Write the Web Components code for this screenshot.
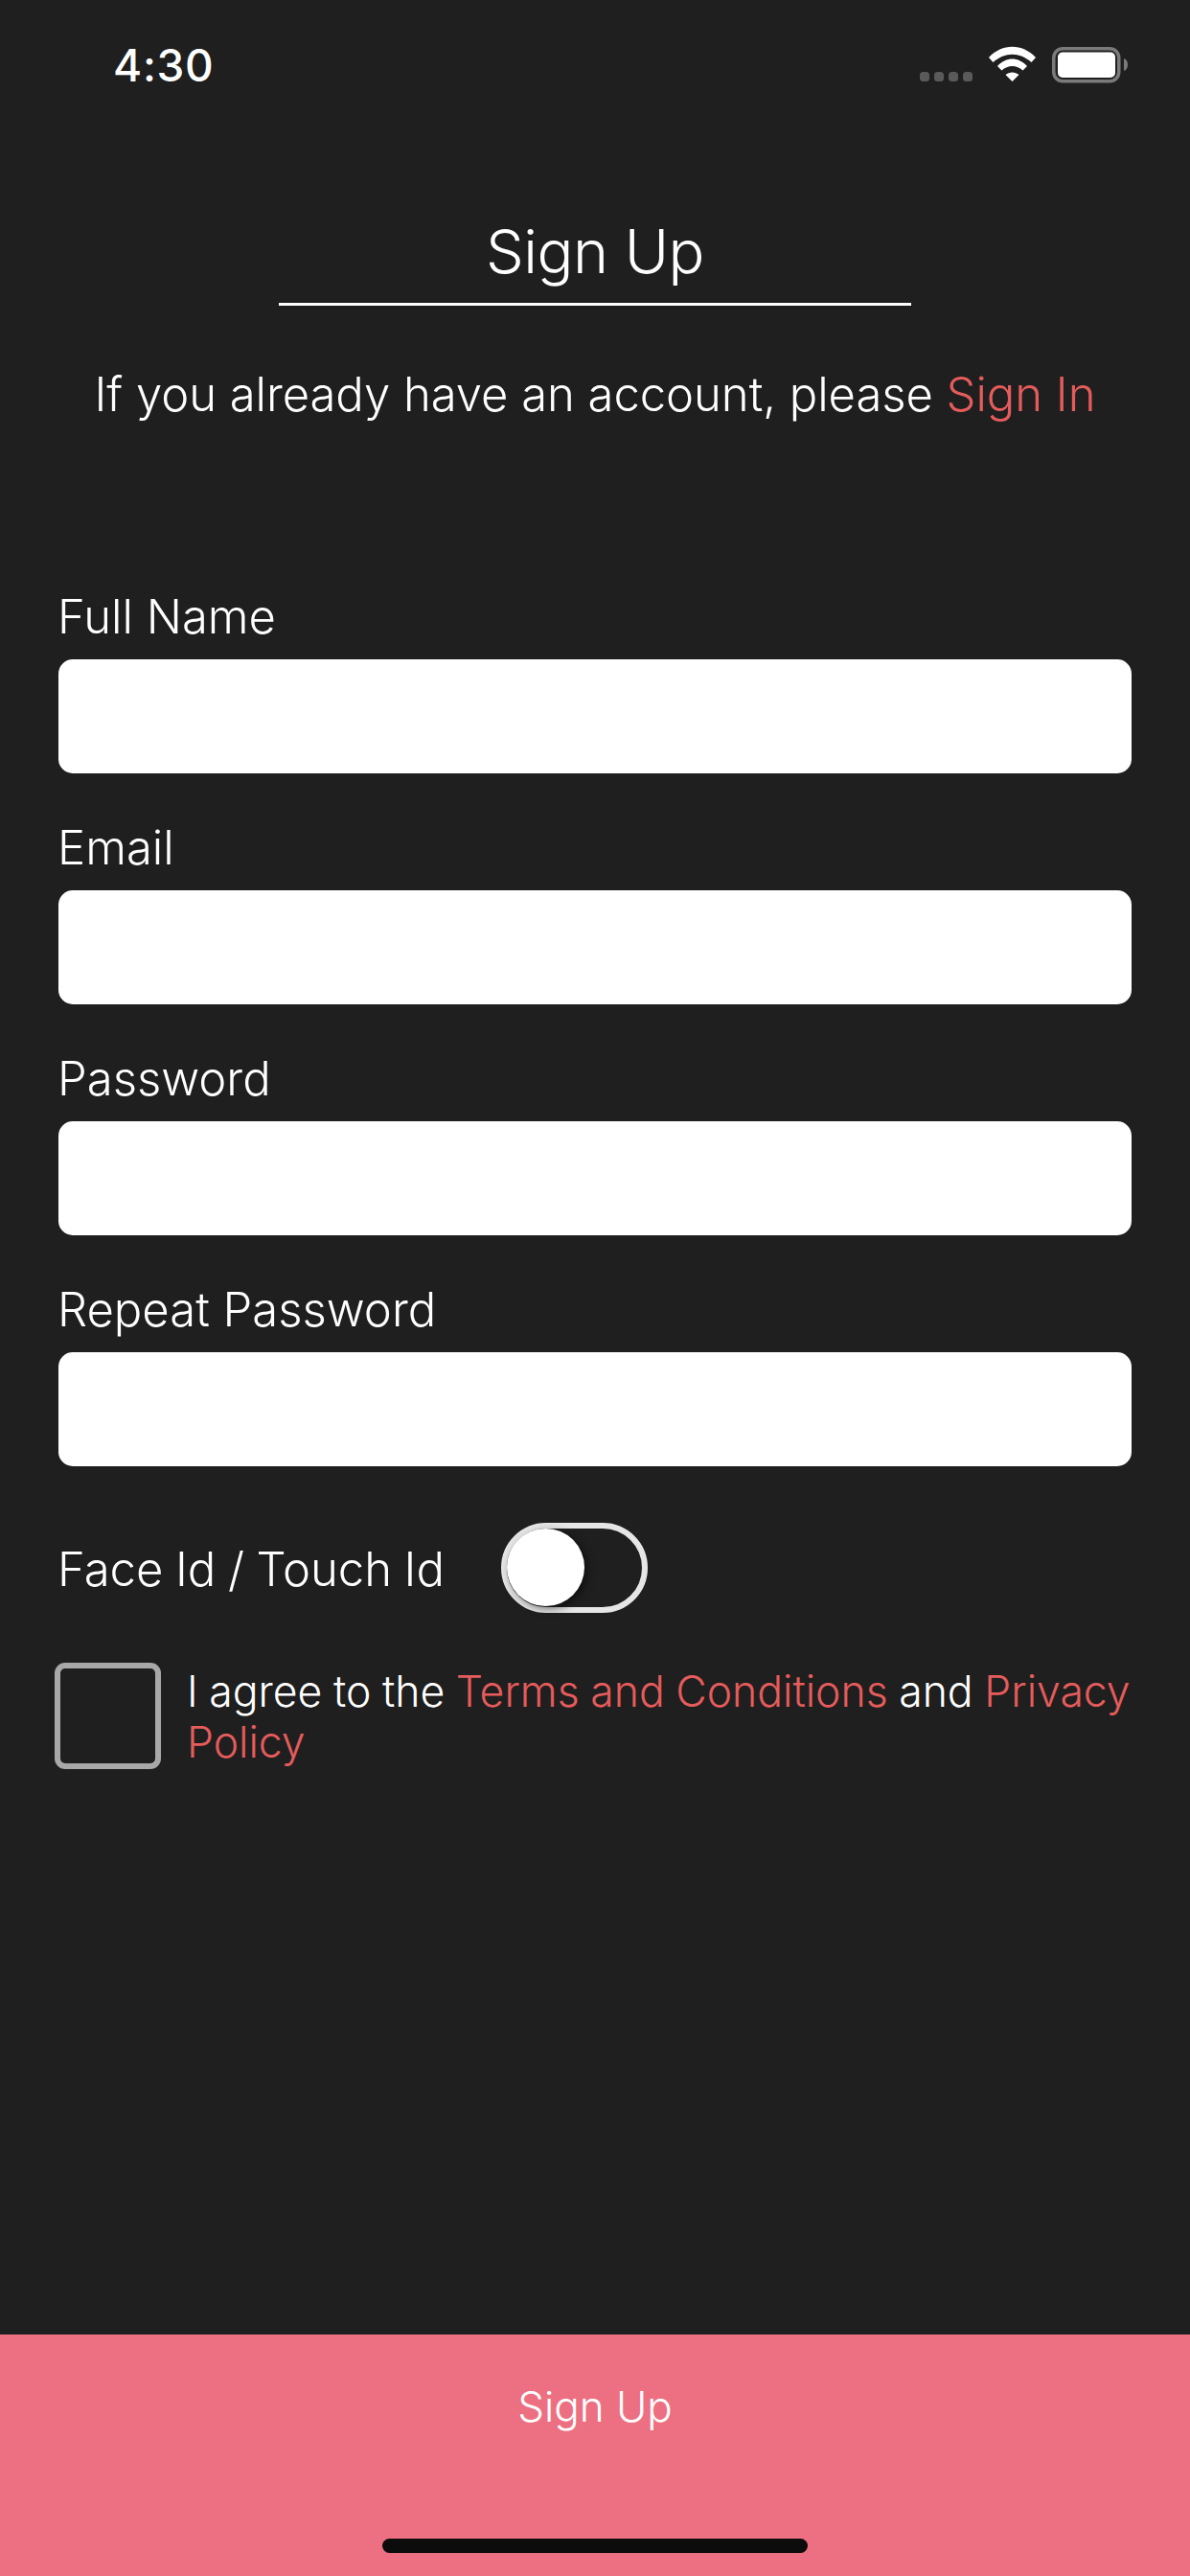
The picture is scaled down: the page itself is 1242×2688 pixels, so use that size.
<!DOCTYPE html>
<html><head><meta charset="utf-8"><style>
html,body{margin:0;padding:0;background:#1f1f1f}
body{width:1242px;height:2688px;font-family:Inter,"Liberation Sans",sans-serif;color:#fff;overflow:hidden}
</style></head><body>
<signup-screen>
<status-bar slot="status"></status-bar>
<page-title slot="title">Sign Up</page-title>
<p-line slot="intro">If you already have an account, please <a-link>Sign In</a-link></p-line>
<form-field slot="fields" label="Full Name"></form-field>
<form-field slot="fields" label="Email"></form-field>
<form-field slot="fields" label="Password"></form-field>
<form-field slot="fields" label="Repeat Password"></form-field>
<toggle-row slot="toggle" label="Face Id / Touch Id"></toggle-row>
<agree-row slot="agree">I agree to the <a-link>Terms and Conditions</a-link> and <a-link>Privacy</a-link><br><a-link>Policy</a-link></agree-row>
<bottom-bar slot="bottom">Sign Up</bottom-bar>
</signup-screen>
<script>
function def(name,html){customElements.define(name,class extends HTMLElement{constructor(){super();this.attachShadow({mode:'open'}).innerHTML=html}
connectedCallback(){const l=this.getAttribute('label');if(l){const e=this.shadowRoot.querySelector('.label');if(e)e.textContent=l}}})}
def('signup-screen',`<style>:host{display:flex;flex-direction:column;width:1242px;height:2688px;background:#1f1f1f}
.main{flex:1;display:flex;flex-direction:column}
.fields{display:flex;flex-direction:column;margin-top:172px}
</style><slot name="status"></slot><div class="main"><slot name="title"></slot><slot name="intro"></slot><div class="fields"><slot name="fields"></slot></div><slot name="toggle"></slot><slot name="agree"></slot></div><slot name="bottom"></slot>`);
def('status-bar',`<style>:host{display:flex;height:132px;box-sizing:border-box;justify-content:space-between;padding:0 42px 0 118px}
.t{font:550 46px/46px Inter,sans-serif;margin-top:45px;letter-spacing:.7px}
svg{display:block}</style><div class="t">4:30</div>
<svg width="300" height="100" viewBox="0 0 300 100" style="margin-top:20px">
<g fill="#5a5a5a"><rect x="60" y="55" width="10" height="10" rx="3.500"/><rect x="75" y="55" width="10" height="10" rx="3.500"/><rect x="90" y="55" width="10" height="10" rx="3.500"/><rect x="105" y="55" width="10" height="10" rx="3.500"/></g>
<path fill="#fff" d="M132 40 C146 25 167 25 181 40 L176.500 45 C164 34 149 34 136.500 45Z M141 49 C150 39 163 39 172 49 L167.500 53.500 C161 47.500 152 47.500 145.500 53.500Z M156.500 65 L149.500 58 C153.500 54.500 159.500 54.500 163.500 58Z"/>
<rect x="199.750" y="30.750" width="68" height="34" rx="9.500" fill="none" stroke="#7a7a7a" stroke-width="3.500"/>
<rect x="204" y="34.500" width="60" height="26.500" rx="5" fill="#fff"/>
<path fill="#7a7a7a" d="M273 41 C276 42 277 45 277 47.500 C277 50 276 53 273 54Z"/></svg>`);
def('page-title',`<style>:host{display:block;width:660px;margin:0 auto;height:187px;padding-top:99px;box-sizing:border-box}
.w{height:85px;border-bottom:3px solid #fff;text-align:center;font:300 63px/62px Inter,sans-serif;letter-spacing:-.5px}
</style><div class="w"><slot></slot></div>`);
def('p-line',`<style>:host{display:block;text-align:center;font:350 49px/60px Inter,sans-serif;margin-top:63px;height:60px;white-space:nowrap;letter-spacing:-.05px}</style><slot></slot>`);
def('a-link',`<style>:host{display:inline;color:#e55c5c}</style><slot></slot>`);
def('form-field',`<style>:host{display:block;padding:0 61px;height:241px}
.label{font:350 49px/60px Inter,sans-serif;height:69px;margin-left:-1px;margin-bottom:5px}
.in{height:119px;background:#fff;border-radius:15px}</style><div class="label"></div><div class="in"></div>`);
def('toggle-row',`<style>:host{display:flex;align-items:center;padding:0 60px;height:94px;margin-top:11px}
.label{font:350 49px/60px Inter,sans-serif;width:463px;white-space:nowrap;word-spacing:-1.2px;padding-top:3px}
.sw{position:relative;width:153px;height:94px;box-sizing:border-box;border:6px solid #e6e6e6;border-radius:47px;background:#1f1f1f}
.k{position:absolute;left:0;top:0;width:81px;height:81px;border-radius:50%;background:#fff;box-shadow:3px 3px 8px rgba(0,0,0,.5)}
</style><div class="label"></div><div class="sw"><div class="k"></div></div>`);
def('agree-row',`<style>:host{display:flex;padding:0 0 0 57px;margin-top:52px;gap:27px;align-items:flex-start}
.b{flex:none;width:111px;height:111px;box-sizing:border-box;border:6px solid #a8a8a8;border-radius:11px}
.t{font:350 44.500px/53px Inter,sans-serif;width:1010px;padding-top:4px;word-spacing:-.9px}</style><div class="b"></div><div class="t"><slot></slot></div>`);
def('bottom-bar',`<style>:host{display:block;height:252px;background:#ec7082;box-sizing:border-box;position:relative;text-align:center;font:350 44px/60px Inter,sans-serif;padding-top:45px}
.h{position:absolute;left:399px;top:213px;width:444px;height:15px;border-radius:7.500px;background:#0c0c0c}</style><slot></slot><div class="h"></div>`);
</script></body></html>
